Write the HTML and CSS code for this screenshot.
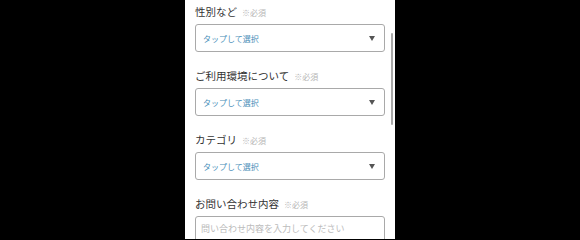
FILE: index.html
```html
<!DOCTYPE html>
<html lang="ja">
<head>
<meta charset="utf-8">
<link rel="stylesheet" href="styles.css">
</head>
<body>
<div class="panel">
  <div class="field">
    <div class="label">性別など<span class="req">※必須</span></div>
    <div class="select"><span class="val">タップして選択</span><span class="arrow"></span></div>
  </div>
  <div class="field">
    <div class="label">ご利用環境について<span class="req">※必須</span></div>
    <div class="select"><span class="val">タップして選択</span><span class="arrow"></span></div>
  </div>
  <div class="field">
    <div class="label">カテゴリ<span class="req">※必須</span></div>
    <div class="select"><span class="val">タップして選択</span><span class="arrow"></span></div>
  </div>
  <div class="field">
    <div class="label">お問い合わせ内容<span class="req">※必須</span></div>
    <div class="textarea"><div class="ph">問い合わせ内容を入力してください</div></div>
  </div>
  <div class="scrollbar"></div>
</div>
</body>
</html>
```
FILE: styles.css
```css
html, body {
  margin: 0;
  padding: 0;
  background: #000;
  height: 239px;
  overflow: hidden;
}
body {
  display: flex;
  justify-content: center;
  font-family: "Noto Sans CJK JP", "Noto Sans", sans-serif;
}
.panel {
  position: relative;
  width: 210px;
  height: 239px;
  box-sizing: border-box;
  background: #fff;
  padding: 2px 10px 0 10px;
  overflow: hidden;
}
.field {
  margin-bottom: 14px;
}
.label {
  height: 20px;
  line-height: 20px;
  font-size: 10.5px;
  color: #333;
  margin-bottom: 2px;
  white-space: nowrap;
}
.req {
  font-size: 8px;
  color: #b5b5b5;
  margin-left: 5px;
}
.select {
  height: 28px;
  box-sizing: border-box;
  border: 1px solid #a9a9a9;
  border-radius: 3px;
  display: flex;
  align-items: center;
  justify-content: space-between;
  padding: 0 9px 0 7px;
}
.val {
  font-size: 8px;
  color: #4a8fb9;
}
.arrow {
  width: 0;
  height: 0;
  border-left: 3px solid transparent;
  border-right: 3px solid transparent;
  border-top: 5px solid #555;
}
.textarea {
  height: 40px;
  box-sizing: border-box;
  border: 1px solid #a9a9a9;
  border-radius: 3px;
  padding: 6px 5px 0 5px;
}
.ph {
  font-size: 9px;
  color: #bcbcbc;
  line-height: 12px;
  white-space: nowrap;
}
.scrollbar {
  position: absolute;
  left: 206px;
  top: 33px;
  width: 2px;
  height: 92px;
  background: #a8a8a8;
  border-radius: 1px;
}
```
